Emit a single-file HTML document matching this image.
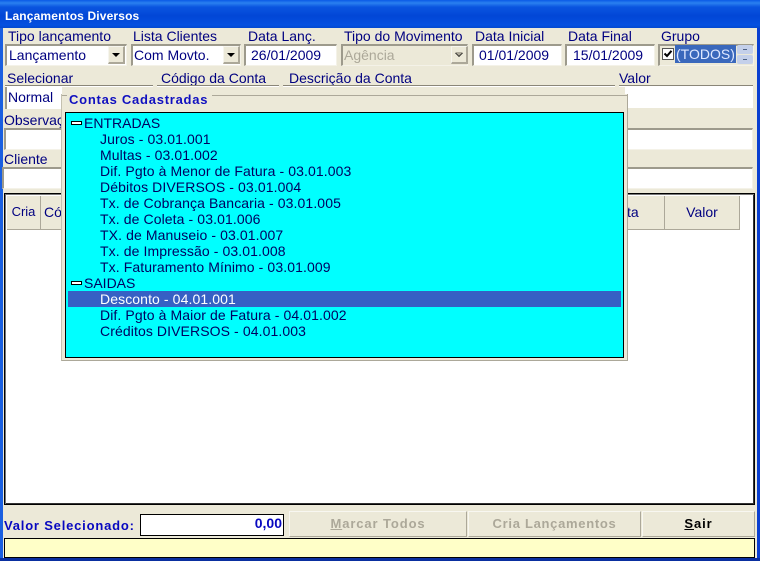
<!DOCTYPE html>
<html><head><meta charset="utf-8">
<style>
html,body{margin:0;padding:0}
body{width:760px;height:561px;overflow:hidden;position:relative;background:#ece9d8;font-family:"Liberation Sans",sans-serif;font-size:14px;color:#000080}
div,span.a{position:absolute;box-sizing:border-box;white-space:nowrap}
.l{height:16px;line-height:16px}
.i{background:#fff;border-top:2px solid #9d9a8c;border-left:2px solid #9d9a8c;border-right:1px solid #f4f2e8;border-bottom:1px solid #f4f2e8;height:22px;line-height:18px;padding-left:2px}
.btn{background:#ece9d8;border-top:1px solid #f6f5ee;border-left:1px solid #f6f5ee;border-right:2px solid #aca899;border-bottom:2px solid #aca899;width:17px;height:18px}
.btn:after{content:"";position:absolute;left:3px;top:6px;border-left:4px solid transparent;border-right:4px solid transparent;border-top:4px solid #000}
.u{height:2px;background:#8a8678;border-bottom:1px solid #fff;top:85px}
.t{left:100px;height:16px;line-height:16px;color:#000060;letter-spacing:.1px}
.b{top:511px;height:26px;background:#ece9d8;border-top:1px solid #f8f7f1;border-left:1px solid #f8f7f1;border-right:1px solid #aca899;border-bottom:1px solid #aca899;text-align:center;font-weight:bold;font-size:13px;line-height:23px;letter-spacing:.9px;color:#aca899}
</style></head><body>
<div style="left:0;top:0;width:760px;height:561px;background:#0a3fc8"></div>
<div style="left:0;top:0;width:3px;height:561px;background:#1a5fe0"></div>
<div style="left:757px;top:0;width:3px;height:561px;background:#0a3fd0"></div>
<div style="left:0;top:558px;width:760px;height:3px;background:#0a2fa0"></div>
<div style="left:0;top:0;width:760px;height:28px;background:linear-gradient(#0a5ae6 0,#2a80f0 3px,#0a55e0 7px,#0246d6 16px,#0450e0 25px,#0348d0 28px)"></div>
<div class="l" style="left:5px;top:8px;color:#fff;font-weight:bold;font-size:12px;letter-spacing:.15px">Lançamentos Diversos</div>
<div style="left:3px;top:28px;width:754px;height:530px;background:#ece9d8"></div>

<div class="l" style="left:8px;top:28px">Tipo lançamento</div>
<div class="l" style="left:133px;top:28px">Lista Clientes</div>
<div class="l" style="left:248px;top:28px">Data Lanç.</div>
<div class="l" style="left:344px;top:28px">Tipo do Movimento</div>
<div class="l" style="left:475px;top:28px">Data Inicial</div>
<div class="l" style="left:568px;top:28px">Data Final</div>
<div class="l" style="left:661px;top:28px">Grupo</div>

<div class="i" style="left:5px;top:44px;width:122px;color:#000080">Lançamento</div>
<div class="btn" style="left:108px;top:46px"></div>
<div class="i" style="left:131px;top:44px;width:110px;padding-left:1px">Com Movto.</div>
<div class="btn" style="left:223px;top:46px"></div>
<div class="i" style="left:244px;top:44px;width:93px;padding-left:5px">26/01/2009</div>
<div class="i" style="left:341px;top:44px;width:127px;background:#ece9d8;color:#aca899;padding-left:1px">Agência</div>
<div class="btn" style="left:451px;top:46px"></div>
<div style="left:455px;top:52px;width:0;height:0;border-left:4px solid transparent;border-right:4px solid transparent;border-top:4px solid #aca899"></div>
<div class="i" style="left:472px;top:44px;width:90px;padding-left:5px">01/01/2009</div>
<div class="i" style="left:565px;top:44px;width:90px;padding-left:6px">15/01/2009</div>
<div class="i" style="left:658px;top:44px;width:96px;background:#ece9d8"></div>
<div style="left:662px;top:48px;width:12px;height:12px;background:#fff;border:1px solid #555"></div>
<svg style="position:absolute;left:663px;top:49px" width="10" height="10"><path d="M1.5 4.5 L4 7 L8.5 1.8" fill="none" stroke="#000" stroke-width="2"/></svg>
<div style="left:675px;top:45px;width:61px;height:18px;background:#3a68bc;color:#dfe8ff;line-height:18px;padding-left:1px">(TODOS)</div>
<div style="left:737px;top:45px;width:16px;height:9px;background:#c4d0ea;border-radius:2px"></div>
<div style="left:737px;top:55px;width:16px;height:9px;background:#c4d0ea;border-radius:2px"></div>
<div style="left:743px;top:49px;width:4px;height:1px;background:#4d6185"></div>
<div style="left:743px;top:59px;width:4px;height:1px;background:#4d6185"></div>

<div class="l" style="left:7px;top:70px">Selecionar</div>
<div class="l" style="left:161px;top:70px">Código da Conta</div>
<div class="l" style="left:289px;top:70px">Descrição da Conta</div>
<div class="l" style="left:619px;top:70px">Valor</div>
<div class="u" style="left:5px;width:148px"></div>
<div class="u" style="left:157px;width:122px"></div>
<div class="u" style="left:283px;width:332px"></div>
<div class="u" style="left:619px;width:134px"></div>
<div style="left:5px;top:87px;width:57px;height:22px;background:#fff;border-left:2px solid #9d9a8c;line-height:20px;padding-left:1px;color:#000080">Normal</div>
<div style="left:625px;top:87px;width:128px;height:21px;background:#fff"></div>

<div class="l" style="left:4px;top:112px">Observação</div>
<div class="i" style="left:4px;top:128px;width:749px;height:22px"></div>
<div class="l" style="left:4px;top:151px">Cliente</div>
<div class="i" style="left:2px;top:167px;width:751px;height:22px"></div>

<div style="left:4px;top:193px;width:751px;height:312px;background:#fff;border:1px solid #000;box-shadow:inset 1px 1px 0 #777,inset -1px -1px 0 #333"></div>
<div style="left:7px;top:196px;width:34px;height:34px;background:#ece9d8;border-right:1px solid #aca899;border-bottom:1px solid #aca899;text-align:center;line-height:32px;font-size:13px">Cria</div>
<div style="left:41px;top:196px;width:24px;height:34px;background:#ece9d8;border-bottom:1px solid #aca899;line-height:32px;padding-left:3px">Có</div>
<div style="left:620px;top:196px;width:45px;height:34px;background:#ece9d8;border-right:1px solid #aca899;border-bottom:1px solid #aca899;line-height:32px;padding-left:7px"><span style="margin-left:0">ta</span></div>
<div style="left:665px;top:196px;width:75px;height:34px;background:#ece9d8;border-right:1px solid #aca899;border-bottom:1px solid #aca899;text-align:center;line-height:32px">Valor</div>

<div style="left:61px;top:94px;width:567px;height:267px;background:#ece9d8;border-right:1px solid #aca899;border-bottom:1px solid #aca899;border-left:1px solid #c4c1b0"></div>
<div style="left:62px;top:95px;width:565px;height:1px;background:#aca899"></div>
<div style="left:67px;top:92px;width:145px;height:16px;background:#ece9d8;color:#1010c0;font-weight:bold;font-size:13px;line-height:16px;letter-spacing:.75px;padding-left:2px">Contas Cadastradas</div>
<div style="left:65px;top:112px;width:559px;height:246px;background:#00ffff;border:1px solid #000"></div>
<div style="left:68px;top:291px;width:553px;height:16px;background:#3660c4"></div>

<div style="left:71px;top:121px;width:11px;height:4px;background:#fff;border:1px solid #000"></div>
<div class="l" style="left:84px;top:115px;color:#000060">ENTRADAS</div>
<div class="t" style="top:131px">Juros - 03.01.001</div>
<div class="t" style="top:147px">Multas - 03.01.002</div>
<div class="t" style="top:163px">Dif. Pgto à Menor de Fatura - 03.01.003</div>
<div class="t" style="top:179px">Débitos DIVERSOS - 03.01.004</div>
<div class="t" style="top:195px">Tx. de Cobrança Bancaria - 03.01.005</div>
<div class="t" style="top:211px">Tx. de Coleta - 03.01.006</div>
<div class="t" style="top:227px">TX. de Manuseio - 03.01.007</div>
<div class="t" style="top:243px">Tx. de Impressão - 03.01.008</div>
<div class="t" style="top:259px">Tx. Faturamento Mínimo - 03.01.009</div>
<div style="left:71px;top:281px;width:11px;height:4px;background:#fff;border:1px solid #000"></div>
<div class="l" style="left:84px;top:275px;color:#000060">SAIDAS</div>
<div class="t" style="top:291px;color:#fff">Desconto - 04.01.001</div>
<div class="t" style="top:307px">Dif. Pgto à Maior de Fatura - 04.01.002</div>
<div class="t" style="top:323px">Créditos DIVERSOS - 04.01.003</div>

<div class="l" style="left:4px;top:518px;color:#0808c0;font-weight:bold;font-size:13px;letter-spacing:.8px">Valor Selecionado:</div>
<div style="left:140px;top:514px;width:144px;height:22px;background:#fff;border:1px solid #000;color:#0808c0;font-weight:bold;text-align:right;line-height:16px;padding-right:1px">0,00</div>
<div class="b" style="left:289px;width:178px"><u>M</u>arcar Todos</div>
<div class="b" style="left:468px;width:173px;letter-spacing:.7px">Cria Lançamentos</div>
<div class="b" style="left:642px;width:113px;color:#000"><u>S</u>air</div>
<div style="left:4px;top:538px;width:751px;height:20px;background:#ffffc8;border:1px solid #000"></div>
</body></html>
